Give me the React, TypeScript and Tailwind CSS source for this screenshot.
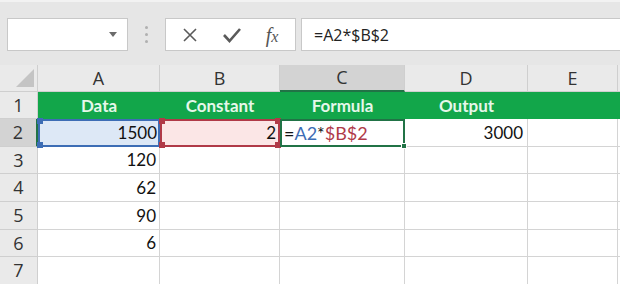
import React from 'react';

const cols = [
  { id: 'A', w: 122 },
  { id: 'B', w: 120 },
  { id: 'C', w: 125 },
  { id: 'D', w: 123 },
  { id: 'E', w: 90 },
];

const data = ['1500', '120', '62', '90', '6', ''];

function Corner({ color, pos }: { color: string; pos: string }) {
  return <span className={`absolute w-[6px] h-[6px] ${color} ${pos}`} />;
}

export default function App() {
  const cellFont = { fontFamily: 'Lato, "Open Sans", sans-serif' };
  const hdrFont = { fontFamily: '"Open Sans", sans-serif' };
  return (
    <div className="w-[620px] h-[284px] overflow-hidden bg-[#e6e6e6]" style={cellFont}>
      {/* formula bar */}
      <div className="h-[65px] border-t-2 border-[#f2f2f2] flex items-start pt-[16px] pl-[7px]">
        <div className="w-[121px] h-[33px] bg-white border border-[#c8c8c8] flex items-center justify-end pr-[10px]">
          <svg width="8" height="5" viewBox="0 0 8 5"><path d="M0 0h8L4 5z" fill="#6b6b6b" /></svg>
        </div>
        <div className="w-[37px] h-[33px] flex flex-col items-center justify-center gap-[4px]">
          <span className="w-[3px] h-[3px] rounded-full bg-[#b0b0b0]" />
          <span className="w-[3px] h-[3px] rounded-full bg-[#b0b0b0]" />
          <span className="w-[3px] h-[3px] rounded-full bg-[#b0b0b0]" />
        </div>
        <div className="w-[131px] h-[33px] bg-white border border-[#c8c8c8] flex items-center">
          <div className="w-[46px] flex justify-center pl-[2px]">
            <svg width="16" height="16" viewBox="0 0 16 16"><path d="M2 2l12 12M14 2L2 14" stroke="#5a5a5a" strokeWidth="1.6" /></svg>
          </div>
          <div className="w-[40px] flex justify-center">
            <svg width="20" height="16" viewBox="0 0 20 16"><path d="M2 8l5.5 6L18 2" stroke="#5a5a5a" strokeWidth="2.6" fill="none" /></svg>
          </div>
          <div className="w-[40px] text-center text-[20px] italic text-[#555] leading-none" style={{ fontFamily: '"Liberation Serif", serif' }}>
            <span>f</span><span className="text-[16px]">x</span>
          </div>
        </div>
        <div className="ml-[5px] flex-1 h-[33px] bg-white border border-[#c8c8c8] border-r-0 flex items-center pl-[12px] text-[16px] text-[#222]" style={hdrFont}>
          =A2*$B$2
        </div>
      </div>

      {/* grid */}
      <div className="grid grid-cols-[38px_122px_120px_125px_123px_90px_2px] grid-rows-[27px_27px_28px_27px_28px_28px_27px_28px]">
        {/* column headers */}
        <div className="bg-[#eaeaea] border-r border-b border-[#cfcfcf] relative">
          <svg className="absolute right-[3px] bottom-[4px]" width="18" height="18" viewBox="0 0 18 18"><path d="M18 0v18H0z" fill="#c4c4c4" /></svg>
        </div>
        {cols.map((c) => (
          <div
            key={c.id}
            className={`flex items-center justify-center text-[18px] text-[#333] border-r border-[#cfcfcf] ${c.id === 'C' ? 'bg-[#d3d3d3] border-b-2 border-b-[#217346]' : 'bg-[#eaeaea] border-b border-b-[#cfcfcf]'}`}
            style={hdrFont}
          >
            {c.id}
          </div>
        ))}
        <div className="bg-[#eaeaea] border-b border-[#cfcfcf]" />

        {/* row 1 */}
        <div className="bg-[#eaeaea] border-r border-b border-[#cfcfcf] flex items-center justify-center text-[18px] text-[#333]" style={hdrFont}>1</div>
        {['Data', 'Constant', 'Formula', 'Output', ''].map((t, i) => (
          <div key={i} className="bg-[#12a64a] flex items-center justify-center text-[17px] font-bold text-[#e6f7ea]">{t}</div>
        ))}
        <div className="bg-[#12a64a]" />

        {/* row 2 */}
        <div className="bg-[#d3d3d3] border-r-2 border-r-[#217346] border-b border-[#cfcfcf] flex items-center justify-center text-[18px] text-[#333]" style={hdrFont}>2</div>
        <div className="relative bg-[#dde8f6] border-2 border-[#3d6db5] flex items-center justify-end pr-[1px] text-[17px] text-[#111]">
          1500
          <Corner color="bg-[#3d6db5]" pos="-left-[3px] -top-[3px]" />
          <Corner color="bg-[#3d6db5]" pos="-left-[3px] -bottom-[3px]" />
        </div>
        <div className="relative bg-[#fbe6e6] border-2 border-[#b03a48] flex items-center justify-end pr-[2px] text-[17px] text-[#111]">
          2
          <Corner color="bg-[#b03a48]" pos="-left-[3px] -top-[3px]" />
          <Corner color="bg-[#b03a48]" pos="-right-[3px] -top-[3px]" />
          <Corner color="bg-[#b03a48]" pos="-left-[3px] -bottom-[3px]" />
          <Corner color="bg-[#b03a48]" pos="-right-[3px] -bottom-[3px]" />
        </div>
        <div className="relative bg-white border-2 border-[#217346] flex items-center pl-[2px] text-[18px]">
          <span className="text-[#111]">=</span>
          <span className="text-[#3d6db5]">A2</span>
          <span className="text-[#111]">*</span>
          <span className="text-[#b03a48]">$B$2</span>
          <span className="absolute -right-[4px] -bottom-[4px] w-[6px] h-[6px] bg-[#217346] border border-white" />
        </div>
        <div className="bg-white border-r border-b border-[#d4d4d4] flex items-center justify-end pr-[4px] text-[17px] text-[#111]">3000</div>
        <div className="bg-white border-r border-b border-[#d4d4d4]" />
        <div className="bg-white border-b border-[#d4d4d4]" />

        {/* rows 3-7 */}
        {data.slice(1).map((v, r) => (
          <React.Fragment key={r}>
            <div className="bg-[#eaeaea] border-r border-b border-[#cfcfcf] flex items-center justify-center text-[18px] text-[#333]" style={hdrFont}>{r + 3}</div>
            <div className="bg-white border-r border-b border-[#d4d4d4] flex items-center justify-end pr-[3px] text-[17px] text-[#111]">{v}</div>
            <div className="bg-white border-r border-b border-[#d4d4d4]" />
            <div className="bg-white border-r border-b border-[#d4d4d4]" />
            <div className="bg-white border-r border-b border-[#d4d4d4]" />
            <div className="bg-white border-r border-b border-[#d4d4d4]" />
            <div className="bg-white border-b border-[#d4d4d4]" />
          </React.Fragment>
        ))}
      </div>
    </div>
  );
}
